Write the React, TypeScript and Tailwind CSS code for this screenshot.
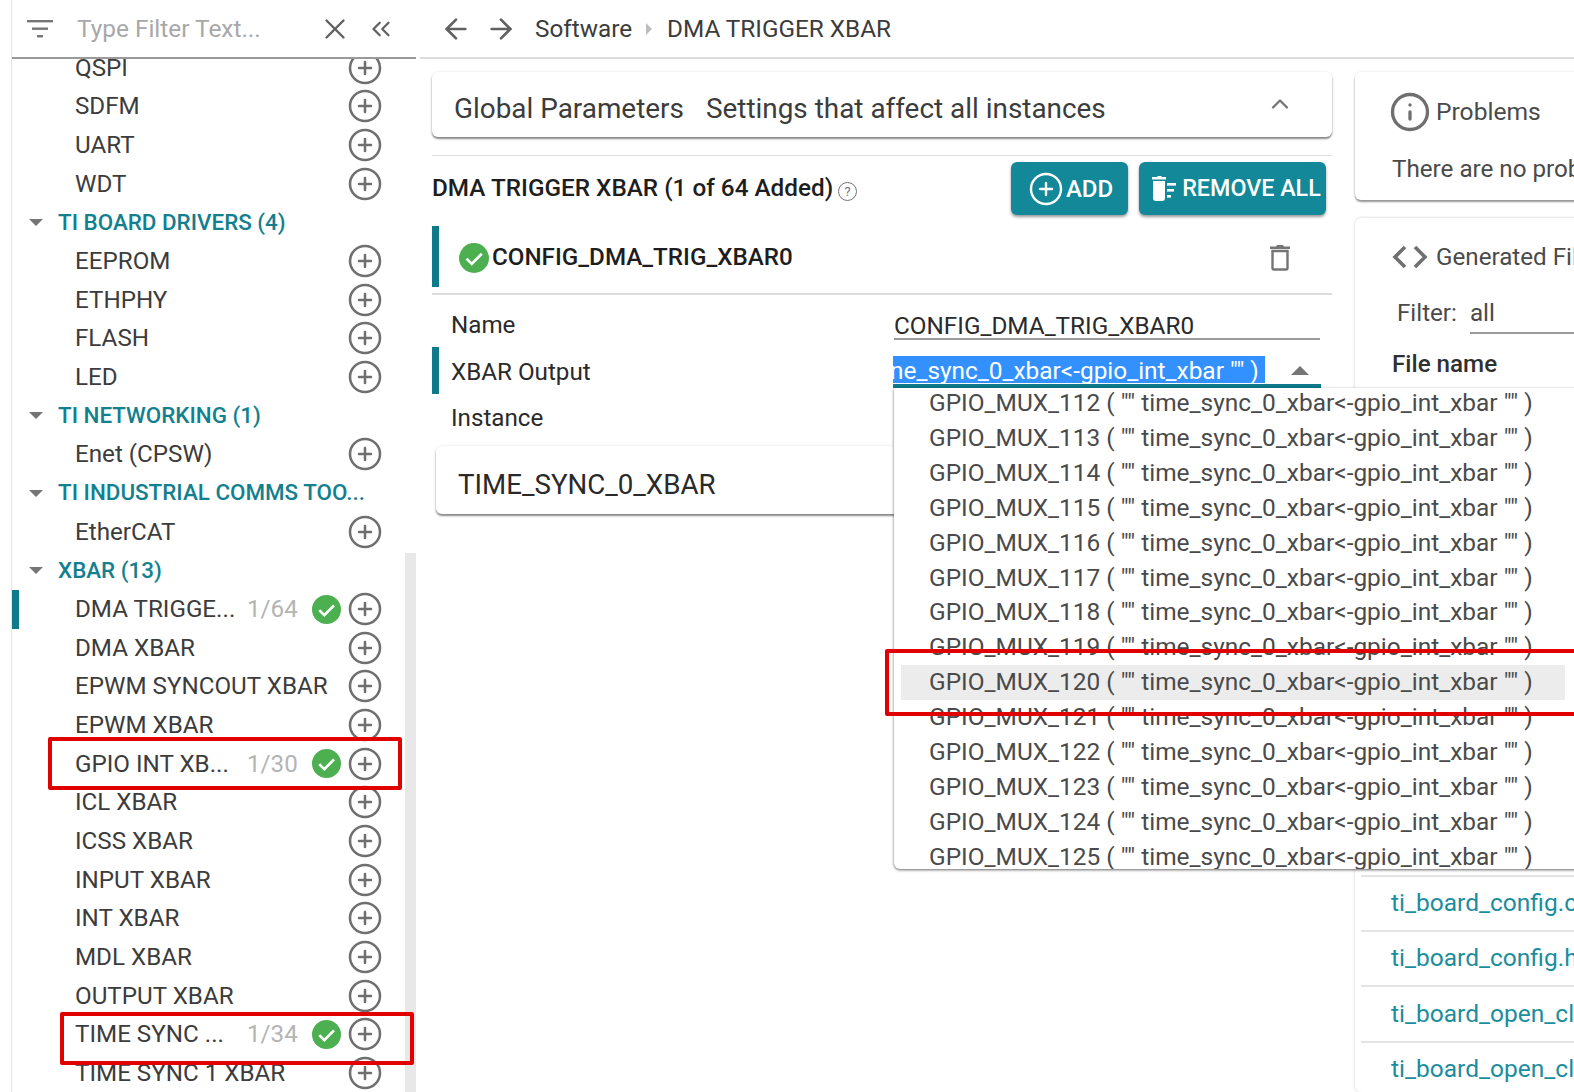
import { ArrowLeft, ArrowRight, ChevronUp, ChevronsLeft, CirclePlus, Info, X } from "lucide-react";

const TEAL = "text-[#13808f]";

type Row =
  | { kind: "section"; label: string }
  | { kind: "item"; label: string; count?: string; active?: boolean };

const sidebarRows: Row[] = [
  { kind: "item", label: "QSPI" },
  { kind: "item", label: "SDFM" },
  { kind: "item", label: "UART" },
  { kind: "item", label: "WDT" },
  { kind: "section", label: "TI BOARD DRIVERS (4)" },
  { kind: "item", label: "EEPROM" },
  { kind: "item", label: "ETHPHY" },
  { kind: "item", label: "FLASH" },
  { kind: "item", label: "LED" },
  { kind: "section", label: "TI NETWORKING (1)" },
  { kind: "item", label: "Enet (CPSW)" },
  { kind: "section", label: "TI INDUSTRIAL COMMS TOO..." },
  { kind: "item", label: "EtherCAT" },
  { kind: "section", label: "XBAR (13)" },
  { kind: "item", label: "DMA TRIGGE...", count: "1/64", active: true },
  { kind: "item", label: "DMA XBAR" },
  { kind: "item", label: "EPWM SYNCOUT XBAR" },
  { kind: "item", label: "EPWM XBAR" },
  { kind: "item", label: "GPIO INT XB...", count: "1/30" },
  { kind: "item", label: "ICL XBAR" },
  { kind: "item", label: "ICSS XBAR" },
  { kind: "item", label: "INPUT XBAR" },
  { kind: "item", label: "INT XBAR" },
  { kind: "item", label: "MDL XBAR" },
  { kind: "item", label: "OUTPUT XBAR" },
  { kind: "item", label: "TIME SYNC ...", count: "1/34" },
  { kind: "item", label: "TIME SYNC 1 XBAR" },
];

const muxRows = [112, 113, 114, 115, 116, 117, 118, 119, 120, 121, 122, 123, 124, 125];

const fileRows = ["ti_board_config.c", "ti_board_config.h", "ti_board_open_close.c", "ti_board_open_close.h"];

function CheckBadge({ size }: { size: number }) {
  return (
    <svg width={size} height={size} viewBox="0 0 24 24" className="shrink-0">
      <circle cx="12" cy="12" r="12" fill="#4caf50" />
      <path d="M6 12.5l4.2 4.2L18.2 8.6" fill="none" stroke="#fff" strokeWidth="2.2" />
    </svg>
  );
}

function FilterIcon() {
  return (
    <svg width="26" height="20" viewBox="0 0 26 20" className="text-[#757575]">
      <rect x="0" y="1" width="26" height="2.4" fill="currentColor" />
      <rect x="5" y="8.5" width="16" height="2.4" fill="currentColor" />
      <rect x="10" y="16" width="6" height="2.4" fill="currentColor" />
    </svg>
  );
}

function TrashLinesIcon() {
  return (
    <svg width="30" height="30" viewBox="0 0 30 30" className="shrink-0">
      <path d="M5 3h5l1-1h3l1 1h4v2.5H5z" fill="#fff" />
      <path d="M6 7h12v17a3 3 0 0 1-3 3H9a3 3 0 0 1-3-3z" fill="#fff" />
      <rect x="20" y="9" width="9" height="2.6" fill="#fff" />
      <rect x="20" y="15" width="7" height="2.6" fill="#fff" />
      <rect x="20" y="21" width="4" height="2.6" fill="#fff" />
    </svg>
  );
}

function DeleteOutlineIcon() {
  return (
    <svg width="20" height="27" viewBox="0 0 20 27" className="shrink-0">
      <path d="M0 2.5h6l1-1.5h6l1 1.5h6v2.5H0z" fill="#757575" />
      <path d="M2.5 7h15v17a1.5 1.5 0 0 1-1.5 1.5H4A1.5 1.5 0 0 1 2.5 24z" fill="none" stroke="#757575" strokeWidth="2.4" />
    </svg>
  );
}

function CodeIcon() {
  return (
    <svg width="38" height="26" viewBox="0 0 38 26" className="shrink-0">
      <path d="M14 3L4 13l10 10M24 3l10 10-10 10" fill="none" stroke="#6f6f6f" strokeWidth="3.6" />
    </svg>
  );
}

function SidebarRow({ row }: { row: Row }) {
  if (row.kind === "section") {
    return (
      <div className="flex h-[38.68px] items-center">
        <div className="ml-[17px] h-0 w-0 border-x-[7px] border-t-[7px] border-x-transparent border-t-[#757575]" />
        <span className={`ml-[15px] whitespace-nowrap text-[22.4px] font-medium ${TEAL}`}>{row.label}</span>
      </div>
    );
  }
  return (
    <div className="relative flex h-[38.68px] items-center">
      {row.active && <div className="absolute left-0 top-0 h-full w-[7px] bg-[#0e7a8a]" />}
      <span className="ml-[63px] whitespace-nowrap text-[24.2px] text-[#3c3c3c]">{row.label}</span>
      {row.count && (
        <div className="absolute left-[235px] top-0 flex h-full items-center gap-[14px]">
          <span className="w-[51px] text-[24.2px] text-[#b4b4b4]">{row.count}</span>
          <CheckBadge size={29} />
        </div>
      )}
      <CirclePlus size={36} strokeWidth={1.7} className="absolute left-[335px] top-[1px] text-[#6f6f6f]" />
    </div>
  );
}

function Sidebar() {
  return (
    <aside className="ml-[11px] flex h-full w-[405px] shrink-0 flex-col border-l border-[#e6e6e6]">
      <div className="z-10 flex h-[59px] shrink-0 items-center border-b-2 border-[#9a9a9a] bg-white">
        <div className="ml-[15px]">
          <FilterIcon />
        </div>
        <span className="ml-[24px] mt-[2px] w-[241px] whitespace-nowrap text-[24.4px] text-[#a8a8a8]">Type Filter Text...</span>
        <X size={34} strokeWidth={1.7} className="text-[#616161]" />
        <ChevronsLeft size={30} strokeWidth={1.8} className="ml-[14px] text-[#616161]" />
      </div>
      <div className="relative flex-1 overflow-hidden">
        <div className="absolute bottom-0 right-0 top-[494px] w-[11px] bg-[#e8e8e8]" />
        <div className="-mt-[10.5px]">
          {sidebarRows.map((row) => (
            <SidebarRow key={row.label} row={row} />
          ))}
        </div>
      </div>
    </aside>
  );
}

function MainPanel() {
  return (
    <main className="w-[915px] shrink-0">
      <div className="flex h-[59px] items-center border-b-2 border-[#dcdcdc]">
        <ArrowLeft size={32} strokeWidth={2} className="ml-[20px] text-[#616161]" />
        <ArrowRight size={32} strokeWidth={2} className="ml-[13px] text-[#616161]" />
        <span className="ml-[18px] mt-[2px] text-[24.3px] text-[#3c3c3c]">Software</span>
        <div className="ml-[14px] h-0 w-0 border-y-[6px] border-l-[6px] border-y-transparent border-l-[#bdbdbd]" />
        <span className="ml-[15px] mt-[2px] text-[24.3px] text-[#3c3c3c]">DMA TRIGGER XBAR</span>
      </div>

      <div className="ml-[12px] mr-[3px]">
        <div className="mt-[13px] flex h-[65px] items-center rounded-[6px] bg-white pl-[22px] pr-[38px] pt-[9px] shadow-[0_2px_2px_rgba(0,0,0,0.45),0_0_3px_rgba(0,0,0,0.1)]">
          <span className="whitespace-nowrap text-[27.9px] text-[#3c3c3c]">Global Parameters</span>
          <span className="ml-[22px] flex-1 whitespace-nowrap text-[27.9px] text-[#3c3c3c]">Settings that affect all instances</span>
          <ChevronUp size={28} strokeWidth={2} className="-mt-[11px] text-[#757575]" />
        </div>

        <div className="mt-[18px] flex h-[71px] items-center border-t border-[#dedede] pb-[5px] pr-[6px]">
          <span className="whitespace-nowrap text-[24.3px] font-medium text-[#1e1e1e]">DMA TRIGGER XBAR (1 of 64 Added)</span>
          <span className="ml-[5px] mt-[6px] flex h-[19px] w-[19px] items-center justify-center rounded-full border border-[#757575] text-[13px] text-[#757575]">
            ?
          </span>
          <button className="ml-auto flex h-[53px] w-[117px] items-center justify-center gap-[2px] rounded-[6px] bg-[#128898] pl-[2px] text-[24px] font-medium text-white shadow-[0_2px_3px_rgba(0,0,0,0.4)]">
            <CirclePlus size={36} strokeWidth={1.6} />
            ADD
          </button>
          <button className="ml-[11px] flex h-[53px] w-[187px] items-center justify-center gap-[5px] rounded-[6px] bg-[#128898] pl-[3px] text-[23.3px] font-medium text-white shadow-[0_2px_3px_rgba(0,0,0,0.4)]">
            <TrashLinesIcon />
            REMOVE ALL
          </button>
        </div>

        <div className="flex h-[69px] border-b-2 border-[#dcdcdc] pb-[6px]">
          <div className="w-[7px] bg-[#0e7a8a]" />
          <div className="ml-[20px] flex flex-1 items-center gap-[3px] pt-[2px]">
            <CheckBadge size={30} />
            <span className="text-[24.2px] font-medium text-[#1e1e1e]">CONFIG_DMA_TRIG_XBAR0</span>
          </div>
          <div className="mr-[42px] mt-[18px]">
            <DeleteOutlineIcon />
          </div>
        </div>

        <div className="flex h-[52px] items-start pl-[19px] pt-[12px]">
          <span className="w-[443px] text-[24.2px] text-[#2a2a2a]">Name</span>
          <div className="mt-[1px] h-[32px] w-[426px] border-b-2 border-[#9a9a9a] pt-[3px] text-[24.3px] leading-[30px] text-[#2a2a2a]">
            CONFIG_DMA_TRIG_XBAR0
          </div>
        </div>
        <div className="flex h-[47px] items-center">
          <div className="h-full w-[7px] bg-[#0e7a8a]" />
          <span className="ml-[12px] mt-[3px] w-[443px] text-[24.2px] text-[#2a2a2a]">XBAR Output</span>
        </div>
        <div className="flex h-[47px] items-center pl-[19px]">
          <span className="mt-[2px] text-[24.2px] text-[#2a2a2a]">Instance</span>
        </div>
        <div className="ml-[4px] mt-[5px] flex h-[68px] items-center rounded-[6px] bg-white pl-[22px] pt-[9px] shadow-[0_2px_2px_rgba(0,0,0,0.45),0_0_3px_rgba(0,0,0,0.1)]">
          <span className="text-[27.7px] text-[#2a2a2a]">TIME_SYNC_0_XBAR</span>
        </div>
      </div>
    </main>
  );
}

function RightPanel() {
  return (
    <section className="flex-1">
      <div className="h-[59px] border-b-2 border-[#dcdcdc]" />
      <div className="ml-[20px]">
        <div className="mt-[13px] h-[128px] rounded-l-[6px] bg-white pl-[37px] pt-[19px] shadow-[0_2px_2px_rgba(0,0,0,0.4),0_0_3px_rgba(0,0,0,0.1)]">
          <div className="flex items-center gap-[5px]">
            <Info size={42} strokeWidth={1.9} className="-ml-[3px] shrink-0 text-[#6f6f6f]" />
            <span className="text-[24.6px] text-[#4a4a4a]">Problems</span>
          </div>
          <p className="mt-[18px] whitespace-nowrap text-[24.2px] text-[#4a4a4a]">There are no problems</p>
        </div>
        <div className="mt-[18px] h-[874px] rounded-l-[6px] bg-white pt-[21px] shadow-[0_0_3px_rgba(0,0,0,0.2)]">
          <div className="flex items-center pl-[36px]">
            <CodeIcon />
            <span className="ml-[7px] whitespace-nowrap text-[24.2px] text-[#4a4a4a]">Generated Files</span>
          </div>
          <div className="ml-[42px] mt-[20px] flex">
            <span className="text-[24.2px] text-[#4a4a4a]">Filter:</span>
            <span className="ml-[13px] flex-1 border-b-2 border-[#9a9a9a] text-[24.2px] text-[#4a4a4a]">all</span>
          </div>
          <div className="ml-[37px] mt-[12px] text-[24.2px] font-medium text-[#303030]">File name</div>
          {/* rows under the open dropdown are never seen */}
          <div className="ml-[6px] mt-[8px] h-[485px] border-t-2 border-[#e4e4e4]" />
          {fileRows.map((name) => (
            <div key={name} className="ml-[6px] flex h-[55.3px] items-center border-t-2 border-[#e4e4e4] pl-[30px]">
              <span className="whitespace-nowrap text-[24.5px] text-[#1a8e9e]">{name}</span>
            </div>
          ))}
        </div>
      </div>
    </section>
  );
}

function XbarDropdown() {
  return (
    <>
      <div className="absolute left-[893px] top-[356px] flex h-[32px] w-[428px] border-b-4 border-[#0e7a8a]">
        <div className="h-[27px] w-[372px] overflow-hidden bg-[#3391ff] pt-[1px] text-[24.4px] leading-[27px] text-white">
          <span className="-ml-[3px] whitespace-nowrap">ne_sync_0_xbar&lt;-gpio_int_xbar "" )</span>
        </div>
        <div className="ml-[26px] mt-[10px] h-0 w-0 border-x-[9px] border-b-[9px] border-x-transparent border-b-[#757575]" />
      </div>
      <div className="absolute left-[894px] top-[388px] h-[481px] w-[700px] overflow-hidden rounded-b-[6px] bg-white pl-[7px] shadow-[0_1px_3px_rgba(0,0,0,0.6)]">
        <div className="-mt-[2px] w-[664px]">
          {muxRows.map((n) => (
            <div
              key={n}
              className={`flex h-[34.9px] items-center whitespace-nowrap pl-[28px] text-[24.45px] text-[#4a4a4a] ${n === 120 ? "bg-[#ececec]" : ""}`}
            >
              GPIO_MUX_{n} ( "" time_sync_0_xbar&lt;-gpio_int_xbar "" )
            </div>
          ))}
        </div>
      </div>
    </>
  );
}

export default function App() {
  return (
    <div className="relative flex h-[1092px] w-[1574px] overflow-hidden bg-white font-['Roboto',sans-serif]">
      <Sidebar />
      <div className="w-[4px] shrink-0" />
      <MainPanel />
      <RightPanel />
      <XbarDropdown />
      {/* red callouts drawn over the screenshot */}
      <div className="absolute left-[48px] top-[737px] h-[53px] w-[354px] rounded-[2px] border-[4px] border-[#e00000]" />
      <div className="absolute left-[60px] top-[1012px] h-[53px] w-[354px] rounded-[2px] border-[4px] border-[#e00000]" />
      <div className="absolute left-[885px] top-[649px] h-[67px] w-[700px] rounded-[2px] border-[4px] border-[#e00000]" />
    </div>
  );
}
